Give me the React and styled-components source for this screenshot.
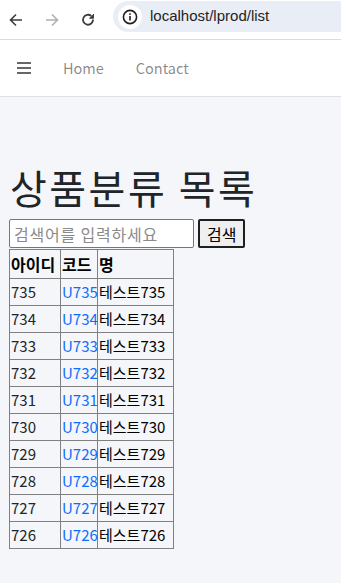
import React from 'react';
import styled, { createGlobalStyle } from 'styled-components';

const GlobalStyle = createGlobalStyle`
  html, body {
    margin: 0;
    padding: 0;
    background: #f5f6fa;
    font-family: "Noto Sans CJK KR", "Noto Sans", sans-serif;
    line-height: 1.5;
    color: #212529;
  }
`;

const Chrome = styled.div`
  height: 39px;
  background: #fff;
  border-bottom: 1px solid #dadce0;
  display: flex;
  align-items: center;
  padding-left: 8px;
  overflow: hidden;
`;

const NavBtn = styled.span`
  width: 16px;
  height: 16px;
  margin-right: ${({ last }) => (last ? '17px' : '20px')};
  display: flex;
  align-items: center;
  justify-content: center;
  color: ${({ dim }) => (dim ? '#b0b0b0' : '#3c3c3c')};
`;

const Omnibox = styled.div`
  flex: 1;
  height: 31px;
  margin-top: -6px;
  background: #e9edf6;
  border-radius: 16px 0 0 16px;
  display: flex;
  align-items: center;
  padding-left: 5px;
  font-family: "Liberation Sans", sans-serif;
  font-size: 15px;
  color: #1f1f1f;
`;

const InfoDot = styled.span`
  width: 24px;
  height: 24px;
  border-radius: 50%;
  background: #fff;
  display: flex;
  align-items: center;
  justify-content: center;
  margin-right: 8px;
`;

const Navbar = styled.nav`
  height: 56px;
  background: #fff;
  border-bottom: 1px solid #dee2e6;
  display: flex;
  align-items: center;
  padding-left: 17px;
`;

const Burger = styled.span`
  width: 14px;
  display: flex;
  flex-direction: column;
  gap: 3px;
  margin-right: 32px;
  span {
    height: 2px;
    background: #666;
  }
`;

const NavLink = styled.a`
  font-size: 14.5px;
  color: rgba(0, 0, 0, 0.48);
  text-decoration: none;
  margin-right: 32px;
`;

const Main = styled.main`
  padding: 66px 9px 30px;
`;

const Title = styled.h1`
  font-size: 40px;
  font-weight: 400;
  line-height: 1.2;
  letter-spacing: 2.5px;
  margin: 0 0 8px 1px;
`;

const SearchForm = styled.form`
  display: flex;
  gap: 4px;
  margin: 0 0 1px;
`;

const SearchInput = styled.input`
  width: 185px;
  height: 29px;
  box-sizing: border-box;
  border: 1px solid #767676;
  border-radius: 2px;
  padding: 1px 4px;
  font-family: inherit;
  font-size: 16px;
  letter-spacing: 0.8px;
  background: #fff;
  &::placeholder {
    color: #8a8a8a;
  }
`;

const SearchButton = styled.button`
  height: 29px;
  box-sizing: border-box;
  border: 2px solid #1f1f1f;
  border-radius: 2px;
  background: #efefef;
  padding: 0 7px;
  font-family: inherit;
  font-size: 16px;
  color: #000;
`;

const Table = styled.table`
  border-collapse: collapse;
  table-layout: fixed;
  width: 164px;
  font-size: 15px;
  color: #212529;
`;

const Th = styled.th`
  border: 1px solid #808080;
  text-align: left;
  padding: 1px;
  height: 26px;
  font-size: 16px;
  font-weight: 700;
  color: #000;
  white-space: nowrap;
`;

const Td = styled.td`
  border: 1px solid #808080;
  padding: 1px;
  height: 24px;
  white-space: nowrap;
  color: ${({ dark }) => (dark ? '#000' : 'inherit')};
`;

const CodeLink = styled.a`
  color: #0d6efd;
  text-decoration: none;
`;

const rows = Array.from({ length: 10 }, (_, i) => 735 - i);

export default function App() {
  return (
    <>
      <GlobalStyle />
      <Chrome>
        <NavBtn>
          <svg width="14" height="14" viewBox="0 0 14 14" fill="none" stroke="currentColor" strokeWidth="1.6">
            <path d="M13 7H2M7 1.5L1.5 7 7 12.5" />
          </svg>
        </NavBtn>
        <NavBtn dim>
          <svg width="14" height="14" viewBox="0 0 14 14" fill="none" stroke="currentColor" strokeWidth="1.6">
            <path d="M1 7h11M7 1.5L12.5 7 7 12.5" />
          </svg>
        </NavBtn>
        <NavBtn last>
          <svg width="14" height="14" viewBox="0 0 14 14" fill="none" stroke="currentColor" strokeWidth="1.8">
            <path d="M12 6.5A5 5 0 1 1 10.3 3" />
            <path d="M12.5 1v4.2H8.3" fill="currentColor" strokeWidth="1" />
          </svg>
        </NavBtn>
        <Omnibox>
          <InfoDot>
            <svg width="16" height="16" viewBox="0 0 16 16">
              <circle cx="8" cy="8" r="6.6" fill="none" stroke="#1f1f1f" strokeWidth="1.6" />
              <rect x="7.2" y="7" width="1.6" height="4.5" fill="#1f1f1f" />
              <rect x="7.2" y="4.3" width="1.6" height="1.6" fill="#1f1f1f" />
            </svg>
          </InfoDot>
          localhost/lprod/list
        </Omnibox>
      </Chrome>
      <Navbar>
        <Burger>
          <span />
          <span />
          <span />
        </Burger>
        <NavLink href="#">Home</NavLink>
        <NavLink href="#">Contact</NavLink>
      </Navbar>
      <Main>
        <Title>상품분류 목록</Title>
        <SearchForm onSubmit={(e) => e.preventDefault()}>
          <SearchInput placeholder="검색어를 입력하세요" />
          <SearchButton type="submit">검색</SearchButton>
        </SearchForm>
        <Table>
          <colgroup>
            <col style={{ width: 51 }} />
            <col style={{ width: 37 }} />
            <col style={{ width: 76 }} />
          </colgroup>
          <thead>
            <tr>
              <Th>아이디</Th>
              <Th>코드</Th>
              <Th>명</Th>
            </tr>
          </thead>
          <tbody>
            {rows.map((n) => (
              <tr key={n}>
                <Td>{n}</Td>
                <Td>
                  <CodeLink href="#">U{n}</CodeLink>
                </Td>
                <Td dark>테스트{n}</Td>
              </tr>
            ))}
          </tbody>
        </Table>
      </Main>
    </>
  );
}
